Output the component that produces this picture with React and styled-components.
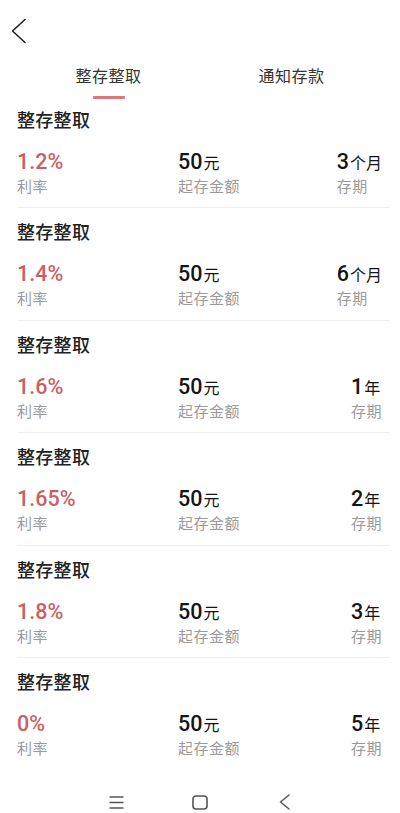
import React, { useState } from "react";
import styled, { createGlobalStyle } from "styled-components";

const GlobalStyle = createGlobalStyle`
  html, body {
    margin: 0;
    padding: 0;
    background: #fff;
  }
  body {
    font-family: "Noto Sans CJK SC", "Noto Sans", sans-serif;
  }
`;

const deposits = [
  { rate: "1.2%", amount: "50", term: "3", unit: "个月" },
  { rate: "1.4%", amount: "50", term: "6", unit: "个月" },
  { rate: "1.6%", amount: "50", term: "1", unit: "年" },
  { rate: "1.65%", amount: "50", term: "2", unit: "年" },
  { rate: "1.8%", amount: "50", term: "3", unit: "年" },
  { rate: "0%", amount: "50", term: "5", unit: "年" },
];

const tabs = ["整存整取", "通知存款"];

export default function App() {
  const [active, setActive] = useState(0);

  return (
    <Page>
      <GlobalStyle />
      <Header>
        <BackButton aria-label="返回">
          <svg width="16" height="26" viewBox="0 0 16 26" fill="none">
            <polyline
              points="14,1.5 1.5,13 14,24.5"
              stroke="#222"
              strokeWidth="1.6"
              strokeLinecap="round"
              strokeLinejoin="round"
            />
          </svg>
        </BackButton>
      </Header>

      <TabBar>
        {tabs.map((t, i) => (
          <Tab key={t} $active={i === active} onClick={() => setActive(i)}>
            {t}
            <Underline $active={i === active} />
          </Tab>
        ))}
      </TabBar>

      <List>
        {deposits.map((d, i) => (
          <Card key={i}>
            <CardTitle>整存整取</CardTitle>
            <Stats>
              <Stat>
                <Value $red>{d.rate}</Value>
                <Label>利率</Label>
              </Stat>
              <Stat>
                <Value>
                  {d.amount}
                  <Unit>元</Unit>
                </Value>
                <Label>起存金额</Label>
              </Stat>
              <Stat $end>
                <Value>
                  {d.term}
                  <Unit>{d.unit}</Unit>
                </Value>
                <Label>存期</Label>
              </Stat>
            </Stats>
          </Card>
        ))}
      </List>

      <NavBar>
        <NavSlot>
          <svg width="15" height="13" viewBox="0 0 15 13">
            <g stroke="#555" strokeWidth="1.5">
              <line x1="0.5" y1="1" x2="14.5" y2="1" />
              <line x1="0.5" y1="6.5" x2="14.5" y2="6.5" />
              <line x1="0.5" y1="12" x2="14.5" y2="12" />
            </g>
          </svg>
        </NavSlot>
        <NavSlot>
          <svg width="16" height="15" viewBox="0 0 16 15">
            <rect
              x="1"
              y="1"
              width="14"
              height="13"
              rx="3"
              fill="none"
              stroke="#555"
              strokeWidth="1.6"
            />
          </svg>
        </NavSlot>
        <NavSlot>
          <svg width="11" height="16" viewBox="0 0 11 16">
            <polyline
              points="10,1 1.5,8 10,15"
              fill="none"
              stroke="#555"
              strokeWidth="1.5"
              strokeLinecap="round"
              strokeLinejoin="round"
            />
          </svg>
        </NavSlot>
      </NavBar>
    </Page>
  );
}

const Page = styled.div`
  width: 400px;
  min-height: 813px;
  display: flex;
  flex-direction: column;
  background: #fff;
`;

const Header = styled.div`
  height: 56px;
  display: flex;
  align-items: center;
  padding-left: 11px;
  box-sizing: border-box;
`;

const BackButton = styled.button`
  border: none;
  background: none;
  padding: 0;
  margin-top: 6px;
  display: flex;
  cursor: pointer;
`;

const TabBar = styled.div`
  display: flex;
  padding: 0 17px;
`;

const Tab = styled.div`
  flex: 1;
  display: flex;
  flex-direction: column;
  align-items: center;
  padding-top: 8px;
  font-size: 16px;
  line-height: 22px;
  color: #333;
  letter-spacing: 0.5px;
  cursor: pointer;
`;

const Underline = styled.span`
  width: 32px;
  height: 2.5px;
  margin-top: 10px;
  border-radius: 1px;
  background: ${p => (p.$active ? "#d9777a" : "transparent")};
`;

const List = styled.div`
  display: flex;
  flex-direction: column;
  padding: 0 10px 0 17px;
`;

const Card = styled.div`
  padding: 8px 0 11.5px;
  border-bottom: 1px solid #eeeeee;
  & + & {
    padding-top: 11px;
  }
  &:last-child {
    border-bottom: none;
  }
`;

const CardTitle = styled.div`
  font-size: 18px;
  line-height: 24px;
  font-weight: 500;
  color: #222;
  letter-spacing: 0.3px;
`;

const Stats = styled.div`
  margin-top: 19px;
  display: grid;
  grid-template-columns: 161px 1fr auto;
  padding-right: 8px;
`;

const Stat = styled.div`
  display: flex;
  flex-direction: column;
  justify-self: ${p => (p.$end ? "end" : "start")};
`;

const Value = styled.div`
  font-family: Roboto, "Noto Sans CJK SC", sans-serif;
  font-size: 21.5px;
  line-height: 24px;
  font-weight: 500;
  color: ${p => (p.$red ? "#cc5f63" : "#151515")};
  white-space: nowrap;
`;

const Unit = styled.span`
  font-family: "Noto Sans CJK SC", sans-serif;
  font-size: 16px;
  font-weight: 400;
  margin-left: 1px;
`;

const Label = styled.div`
  margin-top: 2px;
  font-size: 15px;
  line-height: 20px;
  color: #9a9a9a;
  letter-spacing: 0.5px;
  white-space: nowrap;
`;

const NavBar = styled.div`
  display: flex;
  justify-content: center;
  padding: 25px 0 4px;
`;

const NavSlot = styled.div`
  width: 84px;
  height: 15px;
  display: flex;
  align-items: center;
  justify-content: center;
`;
